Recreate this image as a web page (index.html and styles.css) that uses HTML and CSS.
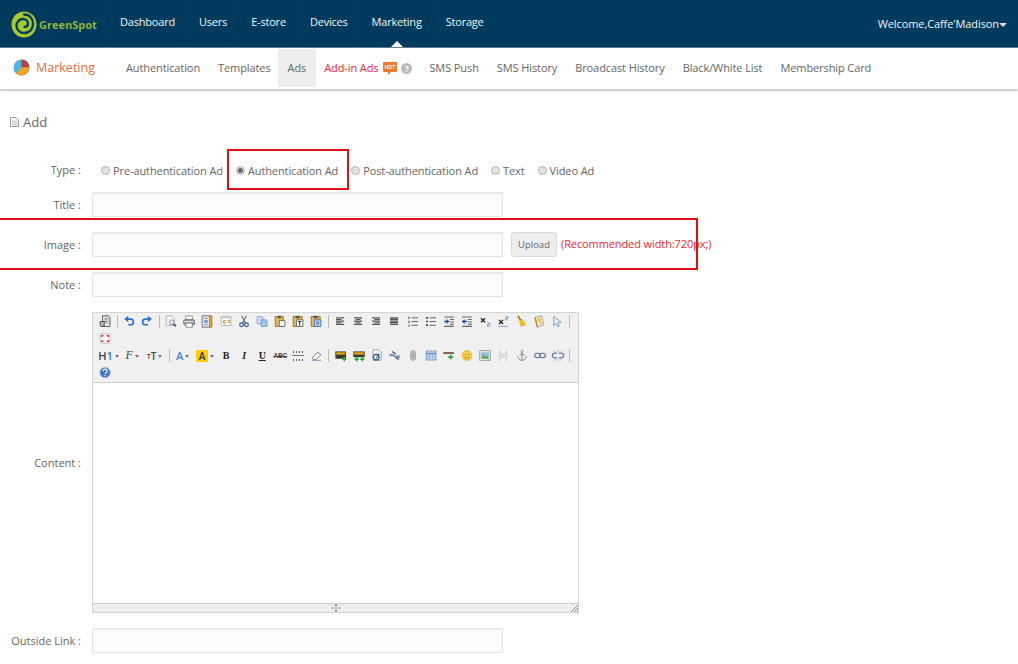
FILE: index.html
```html
<!DOCTYPE html>
<html lang="en">
<head>
<meta charset="utf-8">
<title>GreenSpot - Marketing</title>
<link rel="stylesheet" href="styles.css">
</head>
<body>
<svg class="sprite" width="0" height="0" aria-hidden="true">
  <symbol id="i-source" viewBox="0 0 16 16"><path d="M5 1h7l2 2v11H5z" fill="#f4f4f4" stroke="#333"/><path d="M7 4h5M7 6h5M7 8h5M7 10h5" stroke="#777"/><path d="M2 8h5v6H3l-1-2z" fill="#bbb" stroke="#333"/></symbol>
  <symbol id="i-undo" viewBox="0 0 16 16"><path d="M5 5h5a3 3 0 0 1 0 7H7" fill="none" stroke="#2f6fd0" stroke-width="2"/><path d="M7 1v8L2 5z" fill="#2f6fd0"/></symbol>
  <symbol id="i-redo" viewBox="0 0 16 16"><path d="M11 5H6a3 3 0 0 0 0 7h3" fill="none" stroke="#2f6fd0" stroke-width="2"/><path d="M9 1v8l5-4z" fill="#2f6fd0"/></symbol>
  <symbol id="i-preview" viewBox="0 0 16 16"><path d="M2 1h7l3 3v9H2z" fill="#f5f5f5" stroke="#aaa"/><circle cx="9" cy="9" r="3" fill="#dce8f5" stroke="#7d8fa5"/><path d="M11 11l3 3" stroke="#555" stroke-width="2"/></symbol>
  <symbol id="i-print" viewBox="0 0 16 16"><path d="M4 1h8v5H4z" fill="#fff" stroke="#888"/><rect x="1.500" y="6" width="13" height="6" rx="1" fill="#aaa" stroke="#555"/><path d="M4 10h8v5H4z" fill="#fff" stroke="#777"/><path d="M2 8h12" stroke="#eee"/></symbol>
  <symbol id="i-template" viewBox="0 0 16 16"><path d="M2 1h9v14H2z" fill="#eef2f6" stroke="#555"/><path d="M11 1h3v14h-3z" fill="#e6a33c" stroke="#b57a1c"/><path d="M4 4h5M4 12h5" stroke="#4c7ab0"/><rect x="4" y="6" width="5" height="4" fill="#7ba4cf"/></symbol>
  <symbol id="i-code" viewBox="0 0 16 16"><path d="M2 2h12v11H2z" fill="#fbfbf4" stroke="#aaa"/><path d="M2 2h12v2H2z" fill="#ccc"/><path d="M8 7H5v3h3M10 7h3M10 9h3" fill="none" stroke="#c2861e" stroke-width="1.200"/></symbol>
  <symbol id="i-cut" viewBox="0 0 16 16"><path d="M5 1l5 9M11 1L6 10" stroke="#777" stroke-width="1.500"/><circle cx="5" cy="12" r="2.300" fill="none" stroke="#3a5f9a" stroke-width="1.500"/><circle cx="11" cy="12" r="2.300" fill="none" stroke="#3a5f9a" stroke-width="1.500"/></symbol>
  <symbol id="i-copy" viewBox="0 0 16 16"><path d="M2 2h6l1 1v8H2z" fill="#cfe0f4" stroke="#7d9cc6"/><path d="M7 6h6l1 1v7H7z" fill="#a9c6ea" stroke="#5f86bb"/></symbol>
  <symbol id="i-paste" viewBox="0 0 16 16"><rect x="2" y="2" width="10" height="12" fill="#e4bb52" stroke="#8b6a1d"/><rect x="5" y="1" width="4" height="3" fill="#555"/><path d="M7 7h7v7H7z" fill="#fff" stroke="#555"/></symbol>
  <symbol id="i-paste-text" viewBox="0 0 16 16"><rect x="2" y="2" width="11" height="12" fill="#e4bb52" stroke="#8b6a1d"/><rect x="5" y="1" width="5" height="3" fill="#555"/><path d="M6 6h8v8H6z" fill="#fff" stroke="#555"/><path d="M8 8h4M10 8v5" stroke="#333" stroke-width="1.300"/></symbol>
  <symbol id="i-paste-word" viewBox="0 0 16 16"><rect x="2" y="2" width="11" height="12" fill="#e4bb52" stroke="#8b6a1d"/><rect x="5" y="1" width="5" height="3" fill="#555"/><path d="M6 6h8v8H6z" fill="#cfe0f4" stroke="#2f5fa5"/><path d="M8 9h4M8 11h4" stroke="#2f5fa5" stroke-width="1.300"/></symbol>
  <symbol id="i-left" viewBox="0 0 16 16"><path d="M3 3.500h10M3 5.500h7M3 7.500h10M3 9.500h7M3 11.500h10" stroke="#555" stroke-width="1.400"/></symbol>
  <symbol id="i-center" viewBox="0 0 16 16"><path d="M3 3.500h10M5 5.500h6M3 7.500h10M5 9.500h6M3 11.500h10" stroke="#555" stroke-width="1.400"/></symbol>
  <symbol id="i-right" viewBox="0 0 16 16"><path d="M3 3.500h10M6 5.500h7M3 7.500h10M6 9.500h7M3 11.500h10" stroke="#555" stroke-width="1.400"/></symbol>
  <symbol id="i-full" viewBox="0 0 16 16"><path d="M3 3.500h10M3 5.500h10M3 7.500h10M3 9.500h10M3 11.500h10" stroke="#555" stroke-width="1.500"/></symbol>
  <symbol id="i-ol" viewBox="0 0 16 16"><path d="M3 2v3M3 7v3M3 12v2" stroke="#444" stroke-width="1.300"/><path d="M6 3.500h8M6 8h8M6 12.500h8" stroke="#666" stroke-width="1.300"/></symbol>
  <symbol id="i-ul" viewBox="0 0 16 16"><path d="M2 3.500h2M2 8h2M2 12.500h2" stroke="#222" stroke-width="2"/><path d="M6 3.500h8M6 8h8M6 12.500h8" stroke="#666" stroke-width="1.300"/></symbol>
  <symbol id="i-indent" viewBox="0 0 16 16"><path d="M2 2.500h12M9 5.500h5M9 8.500h5M9 11.500h5M2 14h12" stroke="#666" stroke-width="1.300"/><path d="M2 8h4" stroke="#1f4f96" stroke-width="2"/><path d="M5 5l3.500 3L5 11z" fill="#1f4f96"/></symbol>
  <symbol id="i-outdent" viewBox="0 0 16 16"><path d="M2 2.500h12M9 5.500h5M9 8.500h5M9 11.500h5M2 14h12" stroke="#666" stroke-width="1.300"/><path d="M4 8h4" stroke="#1f4f96" stroke-width="2"/><path d="M5 5L1.500 8 5 11z" fill="#1f4f96"/></symbol>
  <symbol id="i-sub" viewBox="0 0 16 16"><path d="M3 4l5 5M8 4L3 9" stroke="#222" stroke-width="1.600"/><path d="M11 10h3v2h-3v2h3" fill="none" stroke="#6b8fc4"/></symbol>
  <symbol id="i-sup" viewBox="0 0 16 16"><path d="M3 6l5 5M8 6l-5 5" stroke="#222" stroke-width="1.600"/><path d="M11 2h3v2h-3v2h3" fill="none" stroke="#6b8fc4"/><path d="M2 14h12" stroke="#6b8fc4"/></symbol>
  <symbol id="i-brush" viewBox="0 0 16 16"><path d="M4 1l4 6" stroke="#b5701e" stroke-width="2"/><path d="M6 7l3-2 5 7-6 2z" fill="#f2c417" stroke="#c79a10" stroke-width=".5"/></symbol>
  <symbol id="i-book" viewBox="0 0 16 16"><path d="M3 3l8-2 3 11-8 3z" fill="#f4e6b4" stroke="#9a9a9a"/><path d="M3 3l3 12" stroke="#b5813c" stroke-width="1.500"/><circle cx="8" cy="6" r="2" fill="#f2c417"/><path d="M9 8l3 3" stroke="#7b93b8"/></symbol>
  <symbol id="i-cursor" viewBox="0 0 16 16"><path d="M4 2l9 7-4 .500 2 4-2 1-2-4-3 3z" fill="#e6eefa" stroke="#6f8fbe"/></symbol>
  <symbol id="i-full-screen" viewBox="0 0 16 16"><rect x="2" y="2" width="12" height="12" rx="1" fill="#f8f8f8" stroke="#bbb"/><path d="M4 6V4.500h2M12 6V4.500h-2M4 10v1.500h2M12 10v1.500h-2" fill="none" stroke="#d92020" stroke-width="1.500"/></symbol>
  <symbol id="i-img-add" viewBox="0 0 16 16"><rect x="1" y="3" width="13" height="9" fill="#3a3a2a"/><rect x="2" y="4" width="11" height="3" fill="#e3a21a"/><path d="M12 10v5M9.500 12.500h5" stroke="#3aa23a" stroke-width="2"/></symbol>
  <symbol id="i-img-multi" viewBox="0 0 16 16"><rect x="1" y="3" width="14" height="7" fill="#3a3a2a"/><rect x="2" y="4" width="12" height="3" fill="#e3a21a"/><path d="M5 10v5M2.500 12.500h5M12 10v5M9.500 12.500h5" stroke="#3aa23a" stroke-width="2"/></symbol>
  <symbol id="i-flash" viewBox="0 0 16 16"><path d="M3 1h7l3 3v10H3z" fill="#f5f5f5" stroke="#999"/><circle cx="7" cy="10" r="3.500" fill="none" stroke="#2f5f95" stroke-width="1.500"/><path d="M6 13c3-2 1-6 5-7" fill="none" stroke="#444" stroke-width="1.200"/></symbol>
  <symbol id="i-media" viewBox="0 0 16 16"><path d="M1 6h5l2 2h6v3H8L6 9H1z" fill="#7d93ad"/><path d="M4 3l5 3M9 11l4 2" stroke="#556" stroke-width="1.500"/></symbol>
  <symbol id="i-clip" viewBox="0 0 16 16"><rect x="5" y="2" width="6" height="12" rx="3" fill="#c4c4c4" stroke="#999"/><path d="M8 4v8" stroke="#888"/></symbol>
  <symbol id="i-table" viewBox="0 0 16 16"><rect x="2" y="2.500" width="12" height="11" fill="#e2ecf8" stroke="#5e86bd"/><path d="M2 5.500h12" stroke="#5e86bd" stroke-width="2"/><path d="M2 8.500h12M2 11h12M6 5v8M10 5v8" stroke="#8aa8d0"/></symbol>
  <symbol id="i-hr" viewBox="0 0 16 16"><path d="M1 5h13" stroke="#7b6a4a" stroke-width="2.500"/><path d="M10 7v6M7 10h6" stroke="#3aa23a" stroke-width="2"/></symbol>
  <symbol id="i-smile" viewBox="0 0 16 16"><circle cx="8" cy="8" r="6" fill="#f6cf45" stroke="#e2ad2b"/><path d="M6 6v1M10 6v1" stroke="#7a5a12" stroke-width="1.300"/><path d="M5 9.500c1.500 2.500 4.500 2.500 6 0" fill="none" stroke="#9a6b14"/></symbol>
  <symbol id="i-image" viewBox="0 0 16 16"><rect x="1.500" y="2" width="13" height="12" fill="#dfe9df" stroke="#8a9a9a"/><path d="M3 4h10v6H3z" fill="#8fc1e8"/><path d="M3 12l3-5 3 3 2-2 2 4z" fill="#5fa04a"/><circle cx="11" cy="5.500" r="1" fill="#f2c417"/></symbol>
  <symbol id="i-pagebreak" viewBox="0 0 16 16"><path d="M4 1v5h8V1M4 15v-5h8v5" fill="#f5f5f5" stroke="#bbb"/><path d="M1 8h14" stroke="#ccc" stroke-dasharray="2 1"/></symbol>
  <symbol id="i-anchor" viewBox="0 0 16 16"><circle cx="8" cy="3" r="1.500" fill="none" stroke="#889"/><path d="M8 4.500V14M5 7h6M2.500 9c.500 3 3 5 5.500 5s5-2 5.500-5" fill="none" stroke="#889" stroke-width="1.200"/></symbol>
  <symbol id="i-link" viewBox="0 0 16 16"><rect x="1.500" y="5.500" width="7" height="5" rx="2.500" fill="none" stroke="#6a7f9f" stroke-width="1.500"/><rect x="7.500" y="5.500" width="7" height="5" rx="2.500" fill="none" stroke="#6a7f9f" stroke-width="1.500"/></symbol>
  <symbol id="i-unlink" viewBox="0 0 16 16"><path d="M7 5H4a3 3 0 0 0 0 6h3M9 5h3a3 3 0 0 1 0 6H9" fill="none" stroke="#6a7f9f" stroke-width="1.500"/><path d="M3 2l2 2M13 2l-2 2M3 14l2-2M13 14l-2-2M8 1v3M8 12v3" stroke="#8fa3bf"/></symbol>
  <symbol id="i-help" viewBox="0 0 16 16"><circle cx="8" cy="8" r="6.500" fill="#3f78c8" stroke="#a9c4e8"/><path d="M5.500 6.500c0-3.500 5-3.500 5 0 0 2-2.500 2-2.500 3.500" fill="none" stroke="#fff" stroke-width="1.300"/><path d="M8 11v1.500" stroke="#fff" stroke-width="1.300"/></symbol>
</svg>

<header class="topbar">
  <a class="logo">
    <svg class="logo-mark" viewBox="0 0 26 28" aria-hidden="true"><ellipse cx="13" cy="14.500" rx="12.500" ry="13" fill="#a6c92f"/><path d="M13 4.500c6 0 9 4.500 9 9.500 0 5.500-4 9-9 9-4.500 0-7.500-3.500-7.500-7.500 0-3.500 2.700-6.500 6.500-6.500 3 0 5 2 5 4.500 0 2-1.500 3.500-3.500 3.500" fill="none" stroke="#003a5c" stroke-width="2.300" stroke-linecap="round"/></svg>
    <span class="logo-text">GreenSpot</span>
  </a>
  <nav class="mainnav">
    <a class="mainnav-item">Dashboard</a>
    <a class="mainnav-item">Users</a>
    <a class="mainnav-item">E-store</a>
    <a class="mainnav-item">Devices</a>
    <a class="mainnav-item is-current">Marketing</a>
    <a class="mainnav-item">Storage</a>
  </nav>
  <div class="welcome">Welcome,Caffe'Madison<span class="caret"></span></div>
</header>

<div class="subbar">
  <div class="section-title">
    <svg class="pie" viewBox="0 0 18 18" aria-hidden="true"><circle cx="9" cy="9" r="8.500" fill="#4fb6e8"/><path d="M9 9V.5a8.500 8.500 0 0 1 8.500 8.500z" fill="#b8433a"/><path d="M9 9h8.500A8.500 8.500 0 0 1 3 15z" fill="#eda52c"/></svg>
    <span>Marketing</span>
  </div>
  <nav class="subnav">
    <a class="subnav-item">Authentication</a>
    <a class="subnav-item">Templates</a>
    <a class="subnav-item is-active">Ads</a>
    <a class="subnav-item is-hot">Add-in Ads
      <svg class="hot" viewBox="0 0 14 14" aria-hidden="true"><path d="M1 1h12a1 1 0 0 1 1 1v8a1 1 0 0 1-1 1H8l-3 3v-3H1a1 1 0 0 1-1-1V2a1 1 0 0 1 1-1z" fill="#ee7a2d"/><text x="7" y="8" text-anchor="middle" class="hot-text">HOT</text></svg>
      <span class="hint">?</span>
    </a>
    <a class="subnav-item">SMS Push</a>
    <a class="subnav-item">SMS History</a>
    <a class="subnav-item">Broadcast History</a>
    <a class="subnav-item">Black/White List</a>
    <a class="subnav-item">Membership Card</a>
  </nav>
</div>

<main class="content">
  <h1 class="page-title">
    <svg class="doc-icon" viewBox="0 0 9 10" aria-hidden="true"><path d="M.5.500h5.500l2.500 2.500v6.500H.5z" fill="#fff" stroke="#999"/><path d="M2 4h5M2 5.800h5M2 7.600h5" stroke="#aaa" stroke-width=".8"/></svg>
    Add
  </h1>

  <form class="form">
    <label class="form-label">Type :</label>
    <div class="radios">
      <label class="radio"><span class="radio-dot"></span>Pre-authentication Ad</label>
      <label class="radio"><span class="radio-dot is-on"></span>Authentication Ad</label>
      <label class="radio"><span class="radio-dot"></span>Post-authentication Ad</label>
      <label class="radio"><span class="radio-dot"></span>Text</label>
      <label class="radio"><span class="radio-dot"></span>Video Ad</label>
    </div>

    <label class="form-label">Title :</label>
    <div class="field"><input class="input" type="text"></div>

    <label class="form-label">Image :</label>
    <div class="field">
      <input class="input" type="text">
      <button class="btn" type="button">Upload</button>
      <span class="note-red">(Recommended width:720px;)</span>
    </div>

    <label class="form-label">Note :</label>
    <div class="field"><input class="input" type="text"></div>

    <label class="form-label">Content :</label>
    <div class="editor">
      <div class="toolbar">
        <div class="tb-row">
          <svg class="ti"><use href="#i-source"/></svg><i class="tsep"></i>
          <svg class="ti"><use href="#i-undo"/></svg><svg class="ti"><use href="#i-redo"/></svg><i class="tsep"></i>
          <svg class="ti"><use href="#i-preview"/></svg><svg class="ti"><use href="#i-print"/></svg><svg class="ti"><use href="#i-template"/></svg><svg class="ti"><use href="#i-code"/></svg><svg class="ti"><use href="#i-cut"/></svg><svg class="ti"><use href="#i-copy"/></svg><svg class="ti"><use href="#i-paste"/></svg><svg class="ti"><use href="#i-paste-text"/></svg><svg class="ti"><use href="#i-paste-word"/></svg><i class="tsep"></i>
          <svg class="ti"><use href="#i-left"/></svg><svg class="ti"><use href="#i-center"/></svg><svg class="ti"><use href="#i-right"/></svg><svg class="ti"><use href="#i-full"/></svg><svg class="ti"><use href="#i-ol"/></svg><svg class="ti"><use href="#i-ul"/></svg><svg class="ti"><use href="#i-indent"/></svg><svg class="ti"><use href="#i-outdent"/></svg><svg class="ti"><use href="#i-sub"/></svg><svg class="ti"><use href="#i-sup"/></svg><svg class="ti"><use href="#i-brush"/></svg><svg class="ti"><use href="#i-book"/></svg><svg class="ti"><use href="#i-cursor"/></svg><i class="tsep"></i>
        </div>
        <div class="tb-row"><svg class="ti"><use href="#i-full-screen"/></svg></div>
        <div class="tb-row">
          <span class="tt tt-h">H<b>1</b><u></u></span><span class="tt tt-f"><em>F</em><u></u></span><span class="tt tt-s"><small>T</small>T<u></u></span><i class="tsep"></i>
          <span class="tt tt-a">A<u></u></span><span class="tt tt-b"><mark>A</mark><u></u></span>
          <span class="ts ts-b">B</span><span class="ts ts-i">I</span><span class="ts ts-u">U</span><span class="ts ts-abc">ABC</span>
          <span class="ts ts-grid"></span>
          <svg class="ti" viewBox="0 0 16 16"><path d="M3 11l7-7 4 3-6 6H5z" fill="#f7f7f7" stroke="#667"/><path d="M3 14h11" stroke="#6b8fc4"/></svg><i class="tsep"></i>
          <svg class="ti"><use href="#i-img-add"/></svg><svg class="ti"><use href="#i-img-multi"/></svg><svg class="ti"><use href="#i-flash"/></svg><svg class="ti"><use href="#i-media"/></svg><svg class="ti"><use href="#i-clip"/></svg><svg class="ti"><use href="#i-table"/></svg><svg class="ti"><use href="#i-hr"/></svg><svg class="ti"><use href="#i-smile"/></svg><svg class="ti"><use href="#i-image"/></svg><svg class="ti"><use href="#i-pagebreak"/></svg><svg class="ti"><use href="#i-anchor"/></svg><svg class="ti"><use href="#i-link"/></svg><svg class="ti"><use href="#i-unlink"/></svg><i class="tsep"></i>
        </div>
        <div class="tb-row"><svg class="ti"><use href="#i-help"/></svg></div>
      </div>
      <div class="editor-body"></div>
      <div class="statusbar">
        <svg class="drag" viewBox="0 0 12 8" aria-hidden="true"><path d="M6 0l1.500 2h-3zM6 8L4.500 6h3z" fill="#666"/><path d="M1 4h10" stroke="#bbb" stroke-width="1.500"/></svg>
        <svg class="grip" viewBox="0 0 7 7" aria-hidden="true"><path d="M0 7l7-7M3 7l4-4M6 7l1-1" stroke="#888"/></svg>
      </div>
    </div>

    <label class="form-label">Outside Link :</label>
    <div class="field"><input class="input" type="text"></div>
  </form>

  <div class="callout callout-type"></div>
  <div class="callout callout-image"></div>
</main>
</body>
</html>
```

FILE: styles.css
```css
* { box-sizing: border-box; }
html, body { margin: 0; padding: 0; height: 664px; overflow: hidden; background: #fff; }
body { font-family: "Open Sans", "Noto Sans", "Liberation Sans", sans-serif; font-size: 11px; letter-spacing: -.1px; color: #666; }
.sprite { position: absolute; }

.topbar { height: 48px; background: #003a5c; border-bottom: 1px solid #5d7c92; display: flex; align-items: center; color: #fff; }
.logo { width: 108px; display: flex; align-items: center; padding-left: 11px; }
.logo-mark { width: 26px; height: 28px; flex: none; }
.logo-text { margin-left: 2px; margin-top: 2px; font-size: 11px; font-weight: 700; color: #8db53a; letter-spacing: 0; }
.mainnav { display: flex; height: 47px; }
.mainnav-item { padding: 0 12px; line-height: 44px; font-size: 11px; font-weight: 500; letter-spacing: -.2px; color: #f2f6f8; position: relative; border-left: 1px solid #023656; margin-left: -1px; }
.mainnav-item.is-current::after { content: ""; position: absolute; left: 50%; bottom: 0; margin-left: -6px; border: 6px solid transparent; border-top: 0; border-bottom-color: #fff; }
.welcome { margin-left: auto; margin-right: 11px; font-size: 11px; font-weight: 500; color: #f2f6f8; display: flex; align-items: center; }
.caret { margin-top: 3px; border: 4px solid transparent; border-bottom: 0; border-top-color: #d5dde2; }

.subbar { height: 41px; padding-top: 1px; background: #fff; box-shadow: 0 2px 2px #c9c9c9; display: flex; align-items: flex-start; position: relative; }
.section-title { width: 117px; height: 37px; padding-left: 13px; display: flex; align-items: center; gap: 6px; color: #f26b3d; font-size: 12.5px; letter-spacing: 0; }
.pie { width: 17px; height: 17px; flex: none; }
.subnav { display: flex; align-items: center; height: 38px; }
.subnav-item { padding: 0 9px; line-height: 38px; font-size: 11px; color: #666; display: flex; align-items: center; }
.subnav-item.is-active { background: #eee; padding: 0 10px; margin: 0 -1px 0 -2px; }
.subnav-item.is-hot { color: #f8262f; padding-right: 8px; }
.hot { width: 14px; height: 14px; margin-left: 5px; }
.hot-text { font: 700 5px "Liberation Sans", sans-serif; fill: #fff; letter-spacing: 0; }
.hint { width: 11px; height: 11px; margin-left: 4px; border-radius: 50%; background: #bbb; color: #fff; font-size: 8px; font-weight: 700; line-height: 11px; text-align: center; }

.content { padding: 0; position: relative; }
.page-title { margin: 0; height: 74px; padding: 24px 0 0 10px; display: flex; align-items: flex-start; gap: 4px; font-size: 13px; font-weight: 400; color: #666; line-height: 18px; letter-spacing: 0; }
.doc-icon { width: 9px; height: 10px; margin-top: 4px; }

.form { display: grid; grid-template-columns: 81px 1fr; column-gap: 11px; row-gap: 15px; align-items: center; }
.form-label { text-align: right; font-size: 11px; line-height: 14px; letter-spacing: 0; color: #666; white-space: nowrap; }
.radios { display: flex; align-items: center; height: 14px; padding-left: 9px; gap: 13px; }
.radio { display: flex; align-items: center; gap: 3px; font-size: 11px; white-space: nowrap; }
.radio-dot { width: 9px; height: 9px; border-radius: 50%; background: #e2e2e2; border: 1px solid #b5b5b5; position: relative; }
.radio-dot.is-on::after { content: ""; position: absolute; left: 1px; top: 1px; width: 5px; height: 5px; border-radius: 50%; background: #666; }

.field { display: flex; align-items: center; }
.input { width: 411px; height: 25px; border: 1px solid #e3e3e3; border-radius: 2px; background: #fbfbfb; box-shadow: inset 0 1px 2px #f0f0f0; outline: 0; }
.btn { margin-left: 8px; width: 46px; height: 25px; padding: 0; border: 1px solid #d8d8d8; border-radius: 3px; background: #eee; color: #666; font: 9.5px "Open Sans", sans-serif; }
.note-red { margin-left: 4px; margin-bottom: 3px; color: #f8262f; font-size: 11px; white-space: nowrap; }

.editor { width: 487px; height: 301px; border: 1px solid #d5d5d5; display: flex; flex-direction: column; }
.toolbar { height: 70px; flex: none; background: #f0f0f0; border-bottom: 1px solid #ccc; padding: 0 0 0 3px; }
.tb-row { height: 17px; display: flex; align-items: center; }
.ti { width: 18.1px; height: 13px; flex: none; }
.tsep { width: 6px; height: 13px; flex: none; display: flex; justify-content: center; }
.tsep::before { content: ""; width: 1px; height: 13px; background: #bdbdbd; }
.tt { display: flex; align-items: center; justify-content: center; flex: none; font-size: 10px; font-weight: 600; color: #444; height: 14px; }
.tt u { margin-left: 2px; margin-top: 2px; border: 2px solid transparent; border-bottom: 0; border-top: 3px solid #777; }
.tt-h { width: 25px; font-size: 11px; }
.tt-h b { color: #2f7fd8; font-weight: 600; }
.tt-f { width: 22px; }
.tt-f em { font-family: "Liberation Serif", serif; font-size: 12px; font-weight: 400; }
.tt-s { width: 23px; }
.tt-s small { font-size: 7px; margin-top: 2px; }
.tt-a { width: 21px; color: #3f86e0; font-size: 11px; }
.tt-b { width: 24px; }
.tt-b mark { background: #fc0; color: #333; width: 12px; height: 12px; border-radius: 1px; line-height: 12px; text-align: center; }
.ts { width: 18.1px; flex: none; text-align: center; color: #222; font: 700 10px "Liberation Serif", serif; }
.ts-i { font-style: italic; }
.ts-u { text-decoration: underline; }
.ts-abc { font: 700 6.5px "Liberation Sans", sans-serif; color: #444; text-decoration: line-through; }
.ts-grid { height: 12px; background: repeating-linear-gradient(90deg, #555 0 1.5px, transparent 1.5px 3px) center 1px / 11px 2px no-repeat, linear-gradient(#777, #777) center 5px / 12px 1px no-repeat, repeating-linear-gradient(90deg, #555 0 1.5px, transparent 1.5px 3px) center 9px / 11px 2px no-repeat; }

.editor-body { flex: 1; background: #fff; }
.statusbar { height: 9px; flex: none; background: #eee; border-top: 1px solid #ccc; position: relative; display: flex; justify-content: center; }
.drag { width: 12px; height: 8px; }
.grip { position: absolute; right: 0; bottom: 0; width: 7px; height: 7px; }

.callout { position: absolute; border: 2px solid #e00f13; pointer-events: none; }
.callout-type { left: 227px; top: 60px; width: 122px; height: 41px; }
.callout-image { left: -4px; top: 129px; width: 702px; height: 52px; }
```
